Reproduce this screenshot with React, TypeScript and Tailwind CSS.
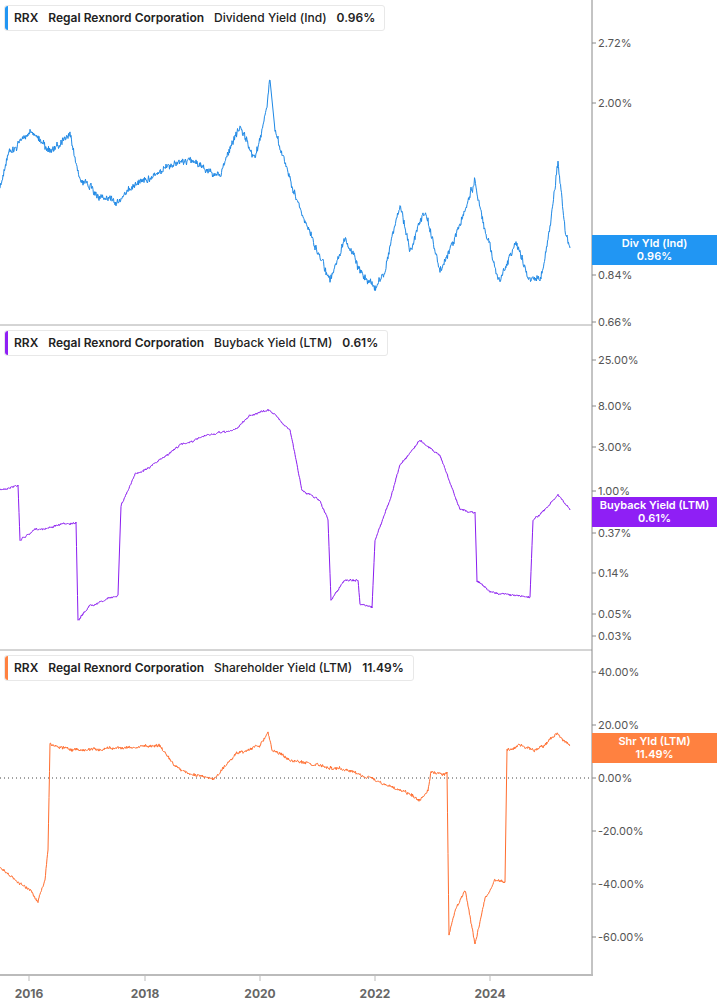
import React from "react";

type Pt = [number, number];

function rng(seed: number) {
  let s = seed;
  return () => {
    s = (s * 16807) % 2147483647;
    return (s - 1) / 2147483646;
  };
}

function build(points: Pt[], amp: number, jitter: number, seed: number) {
  const r = rng(seed);
  const out: string[] = [];
  let drift = 0;
  for (let i = 0; i < points.length - 1; i++) {
    const [x0, y0] = points[i];
    const [x1, y1] = points[i + 1];
    const steep = Math.abs(y1 - y0) > 40 && x1 - x0 < 6;
    for (let x = x0; x < x1; x += 0.5) {
      const t = (x - x0) / (x1 - x0);
      drift = drift * 0.9 + (r() - 0.5) * amp;
      const y = y0 + (y1 - y0) * t + (steep ? 0 : drift + (r() - 0.5) * jitter);
      out.push(`${out.length ? "L" : "M"}${x.toFixed(1)},${y.toFixed(1)}`);
    }
  }
  const last = points[points.length - 1];
  out.push(`L${last[0]},${last[1]}`);
  return out.join(" ");
}

const blue: Pt[] = [[0,190],[10,150],[30,130],[50,150],[70,135],[80,180],[100,195],[120,200],[140,180],[160,170],[190,160],[220,175],[240,130],[255,160],[267,110],[270,80],[275,130],[290,180],[305,220],[320,260],[330,280],[345,240],[360,270],[375,290],[385,270],[400,200],[410,250],[425,210],[440,270],[455,240],[475,180],[485,230],[500,285],[515,240],[530,280],[540,285],[550,230],[558,165],[565,230],[570,248]];
const purple: Pt[] = [[0,490],[18,485],[20,540],[35,530],[60,525],[76,522],[78,620],[90,605],[105,600],[118,595],[121,505],[135,475],[160,460],[180,445],[210,435],[235,430],[250,415],[270,410],[290,430],[302,490],[320,500],[328,520],[331,600],[345,580],[358,580],[360,605],[372,608],[375,540],[390,500],[400,465],[420,440],[440,455],[460,510],[475,512],[477,580],[490,592],[510,595],[530,597],[533,520],[545,510],[558,495],[570,510]];
const orange: Pt[] = [[0,868],[15,880],[30,890],[38,900],[45,880],[48,850],[50,745],[60,748],[80,750],[120,748],[160,747],[175,765],[190,775],[215,778],[235,755],[260,745],[268,733],[272,750],[290,760],[310,765],[330,767],[350,770],[375,780],[400,790],[420,800],[428,790],[431,772],[447,772],[449,935],[455,910],[465,890],[475,945],[485,900],[495,880],[505,882],[507,750],[520,745],[535,752],[550,740],[557,733],[570,745]];

function Legend({ color, label, value }: { color: string; label: string; value: string }) {
  return (
    <div className="absolute left-[4px] top-[5px] flex h-[26px] items-center gap-[10px] whitespace-nowrap rounded-[3px] border border-[#e8e8e8] bg-white pl-[9px] pr-[9px] text-[12px] font-semibold text-[#222]">
      <div className={`absolute left-0 top-0 h-full w-[3px] rounded-l-[3px] ${color}`} />
      <span>RRX</span>
      <span>Regal Rexnord Corporation</span>
      <span className="font-medium">{label}</span>
      <span>{value}</span>
    </div>
  );
}

const ticks = (items: [string, number][]) =>
  items.map(([t, y]) => (
    <g key={t + y}>
      <line x1={592} x2={596} y1={y} y2={y} stroke="#888" />
      <text x={598} y={y + 4} fontSize={11} fill="#555">{t}</text>
    </g>
  ));

export default function App() {
  return (
    <div className="relative h-[1005px] w-[717px] overflow-hidden bg-white" style={{ fontFamily: "Inter, 'Liberation Sans', sans-serif" }}>
      <svg width={717} height={1005} className="absolute left-0 top-0">
        <line x1={0} x2={592} y1={325} y2={325} stroke="#aaa" />
        <line x1={0} x2={592} y1={650} y2={650} stroke="#aaa" />
        <line x1={0} x2={592} y1={778} y2={778} stroke="#444" strokeDasharray="1 3" />
        <line x1={592} x2={592} y1={0} y2={975} stroke="#888" />
        <line x1={0} x2={593} y1={975} y2={975} stroke="#bbb" strokeWidth={2} />
        {ticks([["2.72%",43],["2.00%",103],["0.84%",275],["0.66%",322],["25.00%",360],["8.00%",406],["3.00%",447],["1.00%",491],["0.37%",533],["0.14%",573],["0.05%",614],["0.03%",636],["40.00%",672],["20.00%",725],["0.00%",778],["-20.00%",831],["-40.00%",884],["-60.00%",937]])}
        {[["2016",29],["2018",145],["2020",260],["2022",375],["2024",490]].map(([t, x]) => (
          <g key={t}>
            <line x1={+x} x2={+x} y1={975} y2={981} stroke="#bbb" />
            <text x={+x} y={998} fontSize={12} fontWeight={700} fill="#666" textAnchor="middle">{t}</text>
          </g>
        ))}
        <path d={build(blue, 3, 6, 11)} fill="none" stroke="#1e88e5" strokeWidth={1} />
        <path d={build(purple, 0.8, 1.5, 7)} fill="none" stroke="#8a1cf0" strokeWidth={1} />
        <path d={build(orange, 1.2, 2.5, 5)} fill="none" stroke="#ff6d2e" strokeWidth={1} />
      </svg>
      <div className="absolute left-[592px] top-[235px] flex h-[30px] w-[125px] flex-col items-center justify-center bg-[#2196f3] text-[11px] font-semibold leading-[13px] text-white">
        <span>Div Yld (Ind)</span><span>0.96%</span>
      </div>
      <div className="absolute left-[592px] top-[497px] flex h-[30px] w-[125px] flex-col items-center justify-center bg-[#8f1ff5] text-[11px] font-semibold leading-[13px] text-white">
        <span>Buyback Yield (LTM)</span><span>0.61%</span>
      </div>
      <div className="absolute left-[592px] top-[733px] flex h-[30px] w-[125px] flex-col items-center justify-center bg-[#ff8140] text-[11px] font-semibold leading-[13px] text-white">
        <span>Shr Yld (LTM)</span><span>11.49%</span>
      </div>
      <div className="absolute left-0 top-0"><Legend color="bg-[#2196f3]" label="Dividend Yield (Ind)" value="0.96%" /></div>
      <div className="absolute left-0 top-[325px]"><Legend color="bg-[#8f1ff5]" label="Buyback Yield (LTM)" value="0.61%" /></div>
      <div className="absolute left-0 top-[650px]"><Legend color="bg-[#ff8140]" label="Shareholder Yield (LTM)" value="11.49%" /></div>
    </div>
  );
}
